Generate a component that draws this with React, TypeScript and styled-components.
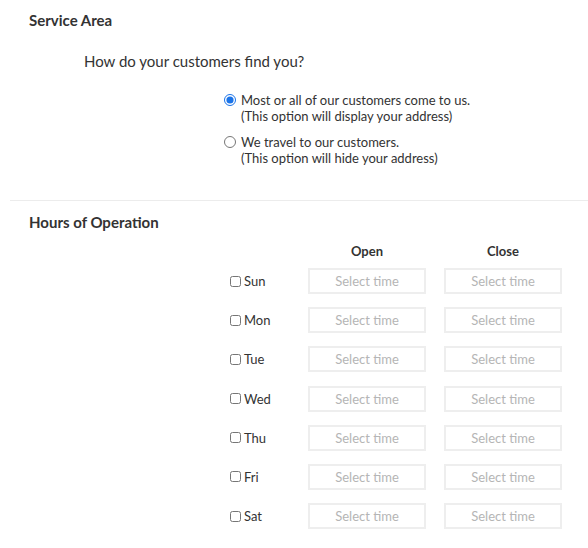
import React from "react";
import styled, { createGlobalStyle } from "styled-components";

const Global = createGlobalStyle`
  html, body { margin: 0; padding: 0; background: #fff; }
  body { font-family: "Lato", "Open Sans", sans-serif; color: #333; }
`;

const Page = styled.div`
  width: 588px;
  display: flex;
  flex-direction: column;
`;

const Section = styled.section`
  display: flex;
  flex-direction: column;
  padding: 11px 0 0 29px;
`;

const Title = styled.h2`
  margin: 0;
  font-size: 15px;
  line-height: 18px;
  font-weight: 700;
  color: #333;
`;

const Question = styled.p`
  margin: 22px 0 0 55px;
  font-size: 15px;
  line-height: 20px;
  color: #333;
`;

const RadioGroup = styled.div`
  display: flex;
  flex-direction: column;
  gap: 10px;
  margin: 21px 0 0 195px;
`;

const RadioRow = styled.label`
  display: flex;
  align-items: flex-start;
  gap: 5px;
  font-size: 13px;
  line-height: 16px;
  color: #333;
`;

const Radio = styled.input`
  margin: 2px 0 0 0;
  width: 12px;
  height: 12px;
  accent-color: #1a73e8;
`;

const RadioText = styled.span`
  display: flex;
  flex-direction: column;
`;

const Divider = styled.hr`
  margin: 34px 0 0 10px;
  border: 0;
  border-top: 1px solid #ececec;
  height: 0;
`;

const HoursSection = styled(Section)`
  padding-top: 12px;
`;

const Table = styled.div`
  display: flex;
  flex-direction: column;
  margin: 12px 0 0 201px;
`;

const Rows = styled.div`
  display: flex;
  flex-direction: column;
  gap: 13.2px;
`;

const Row = styled.div`
  display: flex;
  align-items: center;
`;

const HeaderRow = styled(Row)`
  margin-bottom: 9px;
`;

const DayCell = styled.label`
  width: 78px;
  display: flex;
  align-items: center;
  font-size: 13px;
  color: #333;
`;

const Check = styled.input`
  margin: 0 3px 0 0;
  width: 11px;
  height: 11px;
`;

const HeadCell = styled.div`
  width: 118px;
  text-align: center;
  font-size: 13px;
  font-weight: 700;
  color: #333;
  line-height: 16px;
  & + & { margin-left: 18px; }
`;

const Spacer = styled.div`
  width: 78px;
`;

const TimeBox = styled.div`
  box-sizing: border-box;
  width: 118px;
  height: 26px;
  border: 2px solid #eeeeee;
  display: flex;
  align-items: center;
  justify-content: center;
  font-size: 13px;
  color: #b5b5b5;
  & + & { margin-left: 18px; }
`;

const days = ["Sun", "Mon", "Tue", "Wed", "Thu", "Fri", "Sat"];

export default function App() {
  return (
    <Page>
      <Global />
      <Section>
        <Title>Service Area</Title>
        <Question>How do your customers find you?</Question>
        <RadioGroup>
          <RadioRow>
            <Radio type="radio" name="area" defaultChecked />
            <RadioText>
              <span>Most or all of our customers come to us.</span>
              <span>(This option will display your address)</span>
            </RadioText>
          </RadioRow>
          <RadioRow>
            <Radio type="radio" name="area" />
            <RadioText>
              <span>We travel to our customers.</span>
              <span>(This option will hide your address)</span>
            </RadioText>
          </RadioRow>
        </RadioGroup>
      </Section>
      <Divider />
      <HoursSection>
        <Title>Hours of Operation</Title>
        <Table>
          <HeaderRow>
            <Spacer />
            <HeadCell>Open</HeadCell>
            <HeadCell>Close</HeadCell>
          </HeaderRow>
          <Rows>
            {days.map((d) => (
              <Row key={d}>
                <DayCell>
                  <Check type="checkbox" />
                  {d}
                </DayCell>
                <TimeBox>Select time</TimeBox>
                <TimeBox>Select time</TimeBox>
              </Row>
            ))}
          </Rows>
        </Table>
      </HoursSection>
    </Page>
  );
}
